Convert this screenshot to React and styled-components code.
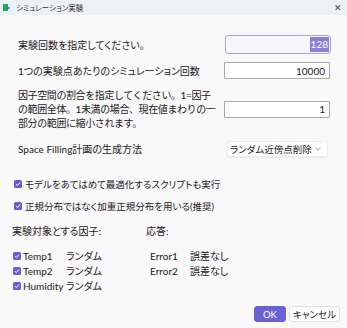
import React from "react";
import styled, { createGlobalStyle } from "styled-components";

const Global = createGlobalStyle`
  html, body { margin: 0; padding: 0; background: #f9f9f9; }
  body {
    font-family: "Lato", "Noto Sans CJK JP", "Noto Sans", sans-serif;
    font-feature-settings: "palt";
    color: #1b1b1b;
  }
`;

const Window = styled.div`
  width: 347px;
  height: 328px;
  background: #f9f9f9;
  display: flex;
  flex-direction: column;
  overflow: hidden;
`;

const TitleBar = styled.div`
  height: 15px;
  background: #eaf2f6;
  display: flex;
  align-items: center;
  padding: 0 5px 0 3px;
  gap: 5px;
  font-size: 7.5px;
  color: #333;
`;

const TitleText = styled.span`
  flex: 1;
`;

const Close = styled.span`
  font-size: 9px;
  color: #444;
  line-height: 1;
`;

const Body = styled.div`
  flex: 1;
  display: flex;
  flex-direction: column;
  padding: 20px 7px 6px 12px;
`;

const FormRow = styled.div`
  display: flex;
  justify-content: space-between;
  align-items: center;
  padding: 0 9px 0 6px;
  margin-top: ${(p) => p.$mt || 0}px;
`;

const Label = styled.div`
  font-size: 10px;
  line-height: 14px;
  width: ${(p) => p.$w || "auto"};
  font-feature-settings: ${(p) => (p.$mono ? "normal" : "palt")};
  letter-spacing: ${(p) => (p.$mono ? "-0.4px" : "normal")};
`;

const NumInput = styled.div`
  box-sizing: border-box;
  width: 106px;
  height: ${(p) => (p.$focus ? 19 : 17)}px;
  display: flex;
  align-items: center;
  justify-content: flex-end;
  padding-right: ${(p) => (p.$focus ? 1 : 4)}px;
  font-size: 10px;
  background: ${(p) => (p.$focus ? "#f6f6fb" : "#ffffff")};
  border: 1px solid ${(p) => (p.$focus ? "#a9a2e8" : "#a8a8a8")};
  border-radius: ${(p) => (p.$focus ? 3 : 1)}px;
  margin-right: ${(p) => (p.$focus ? 0 : 1)}px;
  flex: none;
`;

const Selected = styled.span`
  background: #8a7fd9;
  color: #fff;
  padding: 1px 1px;
  line-height: 13px;
`;

const Dropdown = styled.div`
  box-sizing: border-box;
  width: 101px;
  height: 16px;
  margin-right: 3px;
  display: flex;
  align-items: center;
  justify-content: space-between;
  padding: 0 6px 0 2px;
  background: #fff;
  border: 1px solid #ececec;
  border-radius: 3px;
  font-size: 9.5px;
  box-shadow: 0 1px 1px rgba(0, 0, 0, 0.06);
`;

const Chevron = styled.svg`
  width: 6px;
  height: 4px;
`;

const CheckRow = styled.div`
  display: flex;
  align-items: center;
  gap: 3px;
  font-size: 9.5px;
  padding-left: 2px;
  margin-top: ${(p) => p.$mt || 0}px;
`;

const Box = styled.span`
  width: 8px;
  height: 8px;
  border-radius: 1.5px;
  background: #6a5fcf;
  display: inline-flex;
  align-items: center;
  justify-content: center;
  flex: none;
`;

const Columns = styled.div`
  display: flex;
  margin-top: 11px;
`;

const Column = styled.div`
  width: ${(p) => p.$w}px;
  display: flex;
  flex-direction: column;
`;

const Heading = styled.div`
  font-size: 10px;
  line-height: 14px;
  margin-bottom: 10px;
`;

const ItemRow = styled.div`
  display: flex;
  align-items: center;
  height: 15px;
  font-size: 10px;
  padding-left: ${(p) => p.$pl || 0}px;
`;

const ItemName = styled.span`
  width: ${(p) => p.$w}px;
  margin-left: 2px;
`;

const Footer = styled.div`
  display: flex;
  justify-content: flex-end;
  gap: 3px;
  margin-top: auto;
`;

const Button = styled.div`
  box-sizing: border-box;
  height: 16px;
  min-width: ${(p) => (p.$primary ? 32 : 43)}px;
  padding: 0 3px;
  display: flex;
  align-items: center;
  justify-content: center;
  font-size: 9.5px;
  border-radius: 3px;
  background: ${(p) => (p.$primary ? "#6b62d4" : "#fff")};
  color: ${(p) => (p.$primary ? "#fff" : "#1b1b1b")};
  border: 1px solid ${(p) => (p.$primary ? "#6b62d4" : "#e2e2e2")};
`;

const Check = () => (
  <Box>
    <svg width="6" height="6" viewBox="0 0 6 6">
      <path d="M1 3.2 L2.4 4.5 L5 1.5" stroke="#fff" strokeWidth="1" fill="none" />
    </svg>
  </Box>
);

const AppIcon = () => (
  <svg width="8" height="8" viewBox="0 0 8 8">
    <rect x="0" y="0" width="5" height="7" fill="#2aa84a" />
    <path d="M3 2 L7.5 4 L3 6 Z" fill="#2b7fd6" />
  </svg>
);

const factors = ["Temp1", "Temp2", "Humidity"];
const responses = ["Error1", "Error2"];

export default function App() {
  return (
    <>
      <Global />
      <Window>
        <TitleBar>
          <AppIcon />
          <TitleText>シミュレーション実験</TitleText>
          <Close>✕</Close>
        </TitleBar>
        <Body>
          <FormRow>
            <Label>実験回数を指定してください。</Label>
            <NumInput $focus>
              <Selected>128</Selected>
            </NumInput>
          </FormRow>
          <FormRow $mt={8}>
            <Label>1つの実験点あたりのシミュレーション回数</Label>
            <NumInput>10000</NumInput>
          </FormRow>
          <FormRow $mt={9}>
            <Label $w="199px" $mono>
              因子空間の割合を指定してください。1=因子の範囲全体。1未満の場合、現在値まわりの一部分の範囲に縮小されます。
            </Label>
            <NumInput>1</NumInput>
          </FormRow>
          <FormRow $mt={11}>
            <Label>Space Filling計画の生成方法</Label>
            <Dropdown>
              ランダム近傍点削除
              <Chevron viewBox="0 0 6 4">
                <path d="M0.5 0.8 L3 3.2 L5.5 0.8" stroke="#888" strokeWidth="0.8" fill="none" />
              </Chevron>
            </Dropdown>
          </FormRow>
          <CheckRow $mt={20}>
            <Check />
            モデルをあてはめて最適化するスクリプトも実行
          </CheckRow>
          <CheckRow $mt={8}>
            <Check />
            正規分布ではなく加重正規分布を用いる(推奨)
          </CheckRow>
          <Columns>
            <Column $w={134}>
              <Heading>実験対象とする因子:</Heading>
              {factors.map((f) => (
                <ItemRow key={f} $pl={1}>
                  <Check />
                  <ItemName $w={43}>{f}</ItemName>
                  <span>ランダム</span>
                </ItemRow>
              ))}
            </Column>
            <Column $w={150}>
              <Heading>応答:</Heading>
              {responses.map((r) => (
                <ItemRow key={r} $pl={2}>
                  <ItemName $w={40}>{r}</ItemName>
                  <span>誤差なし</span>
                </ItemRow>
              ))}
            </Column>
          </Columns>
          <Footer>
            <Button $primary>OK</Button>
            <Button>キャンセル</Button>
          </Footer>
        </Body>
      </Window>
    </>
  );
}
